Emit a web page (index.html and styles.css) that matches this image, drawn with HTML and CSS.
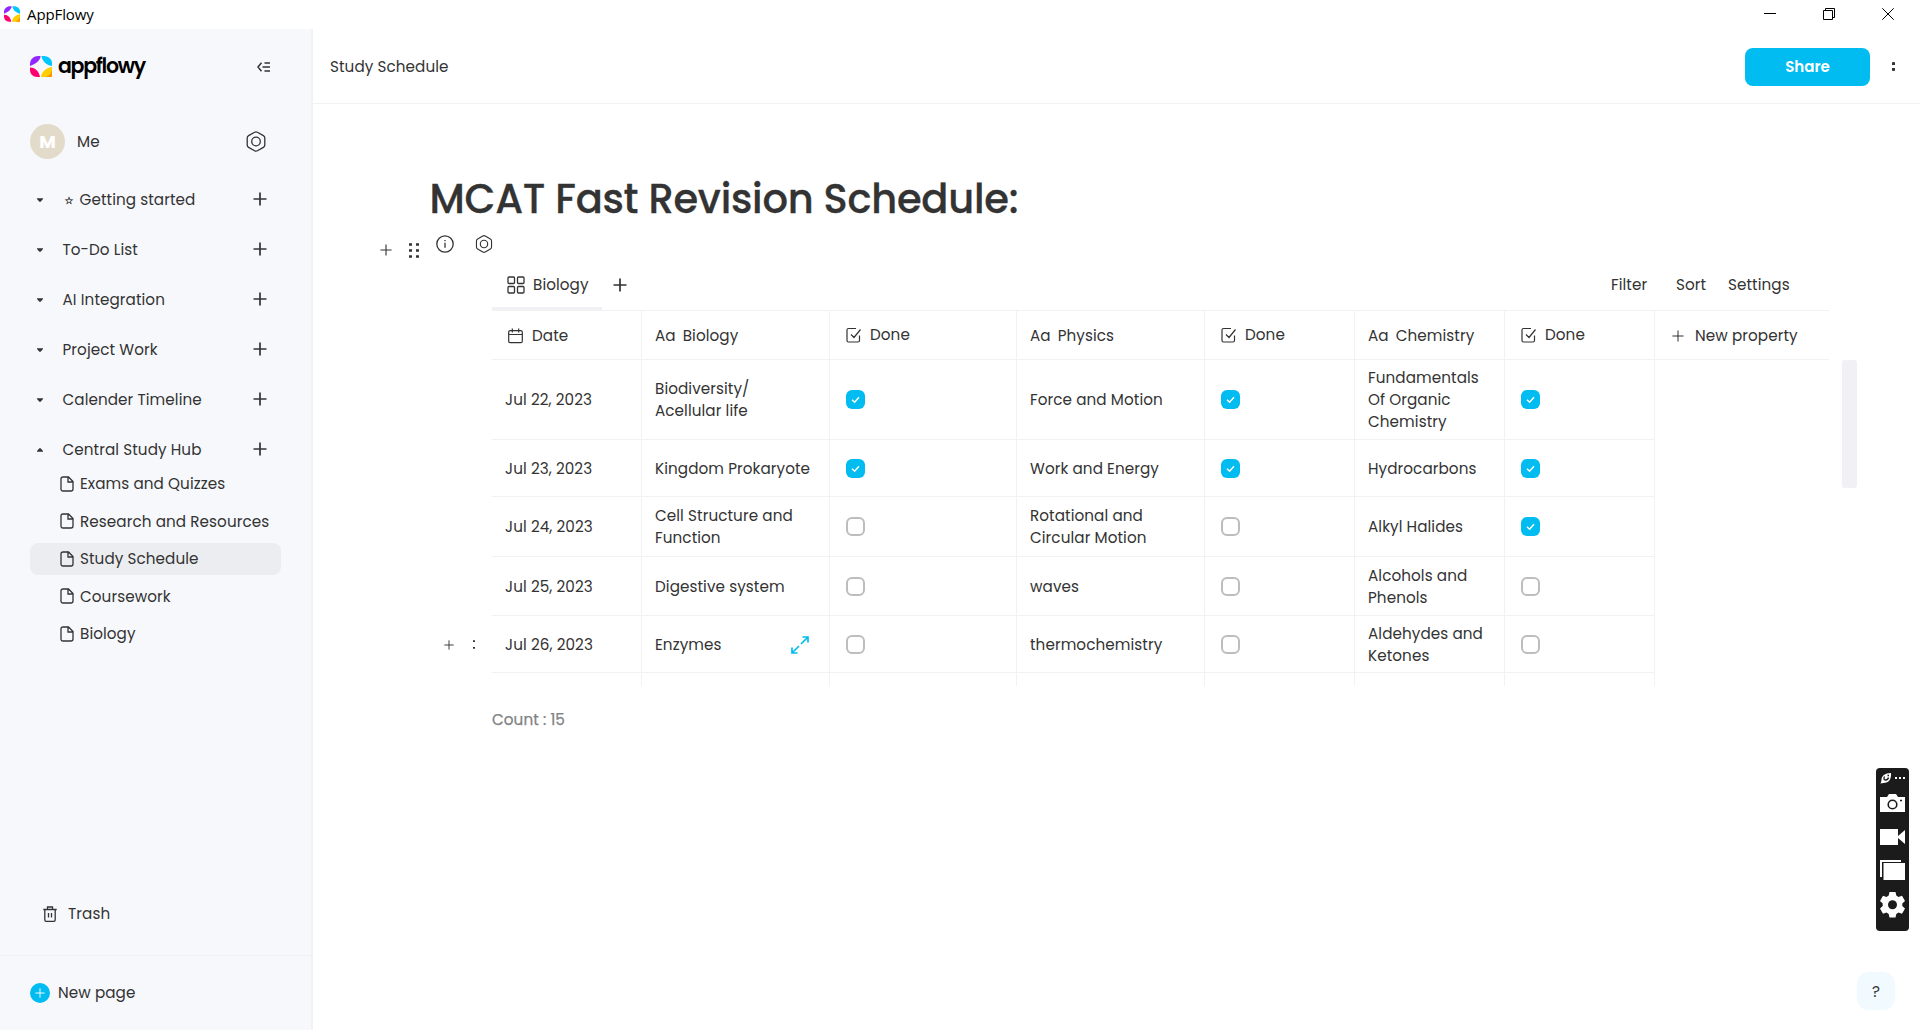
FILE: index.html
```html
<!DOCTYPE html>
<html lang="en">
<head>
<meta charset="utf-8">
<title>AppFlowy</title>
<link rel="stylesheet" href="styles.css">
</head>
<body>
<svg class="defs" aria-hidden="true">
  <symbol id="logo" viewBox="0 0 22 21">
    <path fill="#9327ff" d="M0 10V8C0 3 4 0 8 0h2.500c.500 3-4 8-10.500 10z"/>
    <path fill="#00c8ff" d="M11.500 0h2.500c4 0 8 3 8 7v3C16 9 12 5 11.500 0z"/>
    <path fill="#ff006e" d="M0 11.500c6 0 9 4.500 10 9.500H7c-4 0-7-3-7-7z"/>
    <path fill="#ffce00" d="M22 11v10H11c1-6 5-9 11-10z"/>
    <path fill="#ff9500" d="M22 14v7h-6.500c3-1 5.500-3 6.500-7z"/>
  </symbol>
  <symbol id="plus" viewBox="0 0 14 14"><path d="M7 .5v13M.5 7h13"/></symbol>
  <symbol id="hex" viewBox="0 0 20 21"><path d="M8.600 1.200a2.800 2.800 0 0 1 2.800 0l6 3.400a2.800 2.800 0 0 1 1.400 2.400v7a2.800 2.800 0 0 1-1.400 2.400l-6 3.400a2.800 2.800 0 0 1-2.800 0l-6-3.400A2.800 2.800 0 0 1 1.200 14V7a2.800 2.800 0 0 1 1.400-2.400z"/><circle cx="10" cy="10.500" r="4.300"/></symbol>
  <symbol id="info" viewBox="0 0 18 18"><circle cx="9" cy="9" r="8.200"/><path d="M9 7.800v5M9 5v1.200"/></symbol>
  <symbol id="page" viewBox="0 0 14 16"><path d="M1 3Q1 1 3 1H8.500L13 5.500V13Q13 15 11 15H3Q1 15 1 13zM8 1.200V6H12.800"/></symbol>
  <symbol id="trash" viewBox="0 0 14 16"><path d="M.3 3.500h13.400M4.500 3.300V1h5v2.300M1.800 3.500V14q0 1.300 1.300 1.300h7.800q1.300 0 1.300-1.300V3.500M5.500 7v4.500M8.500 7v4.500"/></symbol>
  <symbol id="grid" viewBox="0 0 18 18"><rect x="1" y="1" width="6.500" height="6.500" rx="1"/><rect x="10.500" y="1" width="6.500" height="6.500" rx="1"/><rect x="1" y="10.500" width="6.500" height="6.500" rx="1"/><rect x="10.500" y="10.500" width="6.500" height="6.500" rx="1"/></symbol>
  <symbol id="cal" viewBox="0 0 15 16"><rect x=".7" y="2.700" width="13.600" height="12" rx="1.500"/><path d="M.7 6.500h13.600M4.300.5v4M10.700.5v4"/></symbol>
  <symbol id="check" viewBox="0 0 16 16"><path d="M10 1.500H2.500q-1.500 0-1.500 1.500V13.500q0 1.500 1.500 1.500H12q1.500 0 1.500-1.500V8.500M5 7.500l3 3L14.500 2.500"/></symbol>
  <symbol id="tick" viewBox="0 0 19 19"><path d="M6 9.800l2.600 2.400 4.400-5"/></symbol>
  <symbol id="expand" viewBox="0 0 18 18"><path d="M11.500 1H17v5.500M17 1l-7 7M6.500 17H1v-5.500M1 17l7-7"/></symbol>
</svg>

<header class="titlebar">
  <svg class="app-icon"><use href="#logo"/></svg>
  <span class="app-name">AppFlowy</span>
  <div class="window-buttons">
    <svg viewBox="0 0 12 12"><path d="M0 5.500h12"/></svg>
    <svg viewBox="0 0 12 12"><path d="M.5 2.500h9v9h-9zM2.500 2.500v-2h9v9h-2"/></svg>
    <svg viewBox="0 0 12 12"><path d="M.3.300l11.400 11.400M11.700.300L.3 11.700"/></svg>
  </div>
</header>

<div class="app">
  <aside class="sidebar">
    <div class="brand">
      <svg class="brand-mark"><use href="#logo"/></svg>
      <span class="brand-name">appflowy</span>
      <svg class="collapse" viewBox="0 0 14 10"><path d="M4.500.800L1 5l3.500 4.200M7.500 1h5.500M5.500 5h7.500M7.500 9h5.500"/></svg>
    </div>
    <div class="user">
      <span class="avatar">M</span>
      <span class="user-name">Me</span>
      <svg class="user-settings"><use href="#hex"/></svg>
    </div>
    <nav>
      <div class="folder"><i class="caret"></i><span><small>☆</small>Getting started</span><svg class="add"><use href="#plus"/></svg></div>
      <div class="folder"><i class="caret"></i><span>To-Do List</span><svg class="add"><use href="#plus"/></svg></div>
      <div class="folder"><i class="caret"></i><span>AI Integration</span><svg class="add"><use href="#plus"/></svg></div>
      <div class="folder"><i class="caret"></i><span>Project Work</span><svg class="add"><use href="#plus"/></svg></div>
      <div class="folder"><i class="caret"></i><span>Calender Timeline</span><svg class="add"><use href="#plus"/></svg></div>
      <div class="folder"><i class="caret up"></i><span>Central Study Hub</span><svg class="add"><use href="#plus"/></svg></div>
      <div class="pages">
        <div class="page"><svg><use href="#page"/></svg><span>Exams and Quizzes</span></div>
        <div class="page"><svg><use href="#page"/></svg><span>Research and Resources</span></div>
        <div class="page selected"><svg><use href="#page"/></svg><span>Study Schedule</span></div>
        <div class="page"><svg><use href="#page"/></svg><span>Coursework</span></div>
        <div class="page"><svg><use href="#page"/></svg><span>Biology</span></div>
      </div>
    </nav>
    <div class="trash"><svg><use href="#trash"/></svg><span>Trash</span></div>
    <div class="new-page"><b><svg><use href="#plus"/></svg></b><span>New page</span></div>
  </aside>

  <main class="main">
    <div class="topbar">
      <span class="crumb">Study Schedule</span>
      <button class="share">Share</button>
      <i class="dots2"></i>
    </div>
    <section class="doc">
      <h1>MCAT Fast Revision Schedule:</h1>
      <div class="block-tools">
        <svg class="bt-plus"><use href="#plus"/></svg>
        <svg class="bt-drag" viewBox="0 0 10 15"><path d="M0 1.500h3M7 1.500h3M0 7.500h3M7 7.500h3M0 13.500h3M7 13.500h3"/></svg>
        <svg class="bt-info"><use href="#info"/></svg>
        <svg class="bt-hex"><use href="#hex"/></svg>
      </div>
      <div class="database">
        <div class="tabs">
          <div class="tab"><svg><use href="#grid"/></svg><span>Biology</span></div>
          <svg class="tab-add"><use href="#plus"/></svg>
          <span class="filter">Filter</span><span class="sort">Sort</span><span class="settings">Settings</span>
        </div>
        <div class="row head">
          <div class="cell"><svg class="cal"><use href="#cal"/></svg><span>Date</span></div>
          <div class="cell"><em>Aa</em><span>Biology</span></div>
          <div class="cell box"><svg><use href="#check"/></svg><span>Done</span></div>
          <div class="cell"><em>Aa</em><span>Physics</span></div>
          <div class="cell box"><svg><use href="#check"/></svg><span>Done</span></div>
          <div class="cell"><em>Aa</em><span>Chemistry</span></div>
          <div class="cell box"><svg><use href="#check"/></svg><span>Done</span></div>
          <div class="cell new-prop"><svg><use href="#plus"/></svg><span>New property</span></div>
        </div>
        <div class="grid-body">
          <div class="row r1">
            <div class="cell date">Jul 22, 2023</div><div class="cell">Biodiversity/<br>Acellular life</div>
            <div class="cell box"><i class="cb on"><svg><use href="#tick"/></svg></i></div><div class="cell">Force and Motion</div>
            <div class="cell box"><i class="cb on"><svg><use href="#tick"/></svg></i></div><div class="cell">Fundamentals<br>Of Organic<br>Chemistry</div>
            <div class="cell box"><i class="cb on"><svg><use href="#tick"/></svg></i></div>
          </div>
          <div class="row r2">
            <div class="cell date">Jul 23, 2023</div><div class="cell">Kingdom Prokaryote</div>
            <div class="cell box"><i class="cb on"><svg><use href="#tick"/></svg></i></div><div class="cell">Work and Energy</div>
            <div class="cell box"><i class="cb on"><svg><use href="#tick"/></svg></i></div><div class="cell">Hydrocarbons</div>
            <div class="cell box"><i class="cb on"><svg><use href="#tick"/></svg></i></div>
          </div>
          <div class="row r3">
            <div class="cell date">Jul 24, 2023</div><div class="cell">Cell Structure and<br>Function</div>
            <div class="cell box"><i class="cb"></i></div><div class="cell">Rotational and<br>Circular Motion</div>
            <div class="cell box"><i class="cb"></i></div><div class="cell">Alkyl Halides</div>
            <div class="cell box"><i class="cb on"><svg><use href="#tick"/></svg></i></div>
          </div>
          <div class="row r4">
            <div class="cell date">Jul 25, 2023</div><div class="cell">Digestive system</div>
            <div class="cell box"><i class="cb"></i></div><div class="cell">waves</div>
            <div class="cell box"><i class="cb"></i></div><div class="cell">Alcohols and<br>Phenols</div>
            <div class="cell box"><i class="cb"></i></div>
          </div>
          <div class="row r5">
            <div class="row-tools"><svg><use href="#plus"/></svg><i class="dots2"></i></div>
            <div class="cell date">Jul 26, 2023</div><div class="cell">Enzymes<svg class="expand"><use href="#expand"/></svg></div>
            <div class="cell box"><i class="cb"></i></div><div class="cell">thermochemistry</div>
            <div class="cell box"><i class="cb"></i></div><div class="cell">Aldehydes and<br>Ketones</div>
            <div class="cell box"><i class="cb"></i></div>
          </div>
          <div class="row r6">
            <div class="cell"></div><div class="cell"></div><div class="cell"></div><div class="cell"></div><div class="cell"></div><div class="cell"></div><div class="cell"></div>
          </div>
          <div class="scrollbar"></div>
        </div>
        <div class="count">Count : 15</div>
      </div>
    </section>
  </main>
</div>

<div class="capture">
  <svg viewBox="0 0 33 163">
    <g fill="#fff">
      <path d="M4.500 15.500l1-3C5 8 9 5 15 5c.500 6-2 10-7.500 10z"/>
      <rect x="19" y="9" width="2" height="2"/><rect x="23" y="9" width="2" height="2"/><rect x="27" y="9" width="2" height="2"/>
      <path d="M4 29h7l2-3h7l2 3h7v15H4z"/>
      <path d="M4 61h18v16H4zM22 68l7-6v14l-7-6z"/>
      <path d="M4 92h21v2H6v15H4zM7.500 95H29v17H7.500z"/>
      <path d="M13.500 125h6l.800 3.600 2.200 1.300 3.500-1.200 3 5.200-2.700 2.500v2.700l2.700 2.500-3 5.200-3.500-1.200-2.200 1.300-.800 3.600h-6l-.800-3.600-2.200-1.300-3.500 1.200-3-5.200 2.700-2.500v-2.700l-2.700-2.500 3-5.200 3.500 1.200 2.200-1.300z" transform="translate(0 -1)"/>
    </g>
    <circle cx="16.500" cy="36.500" r="4.300" fill="none" stroke="#1b1b1b" stroke-width="1.600"/>
    <path d="M24 32.500h2M8.500 8.500q-1.500 3.500 1 3.500t3-2.500M11.500 7.500h1.500" stroke="#1b1b1b" fill="none"/>
    <circle cx="16.500" cy="136.700" r="4.500" fill="#1b1b1b"/>
  </svg>
</div>
<div class="help">?</div>
</body>
</html>
```
FILE: styles.css
```css
* { box-sizing: border-box; }
body {
  margin: 0; width: 1920px; height: 1030px; overflow: hidden; position: relative;
  display: flex; flex-direction: column; background: #fff; color: #333;
  font-family: Poppins, Inter, sans-serif; font-size: 15.200px; letter-spacing: .08px;
}
svg { fill: none; stroke: #333; stroke-width: 1.3; flex: none; display: block; }
i, em { font-style: normal; }
.defs { position: absolute; width: 0; height: 0; }

.titlebar { height: 29px; padding-bottom: 1px; flex: none; display: flex; align-items: center; padding-left: 4px; color: #000; }
.app-icon { width: 16px; height: 16px; stroke: none; }
.app-name { margin: -1px 0 0 7px; font: 15px "Open Sans", sans-serif; letter-spacing: -.1px; }
.window-buttons { margin-left: auto; display: flex; gap: 47px; padding-right: 26px; }
.window-buttons svg { width: 12px; height: 12px; stroke: #000; stroke-width: 1; }

.app { flex: 1; display: flex; min-height: 0; }
.sidebar { width: 313px; flex: none; background: #f7f8fc; border-right: 2px solid #f2f2f4; display: flex; flex-direction: column; }
.brand { height: 75px; padding: 0 40px 0 30px; display: flex; align-items: center; }
.brand-mark { width: 22px; height: 21px; stroke: none; }
.brand-name { margin: -3px 0 0 6px; font: 600 20.500px Poppins, Inter, sans-serif; color: #000; letter-spacing: -1.300px; }
.collapse { width: 14px; height: 10px; margin-left: auto; stroke-width: 1.500; }
.user { height: 66px; margin-top: 4px; padding: 0 45px 0 30px; display: flex; align-items: center; }
.avatar { width: 35px; height: 35px; border-radius: 50%; background: #e3dbc9; color: #fff; font-weight: 700; font-size: 18px; display: grid; place-items: center; }
.user-name { margin-left: 12px; }
.user-settings { width: 20px; height: 21px; margin-left: auto; }
.folder { height: 50px; padding: 0 44px 0 37px; display: flex; align-items: center; }
.folder .add { width: 14px; height: 14px; margin-left: auto; stroke-width: 1.700; }
.caret { width: 6px; height: 3.500px; margin: 2px 19.500px 0 0; background: #333; clip-path: polygon(0 0, 100% 0, 100% 20%, 60% 100%, 40% 100%, 0 20%); }
.caret.up { clip-path: polygon(0 100%, 100% 100%, 100% 80%, 60% 0, 40% 0, 0 80%); }
.folder small { font: 10px "DejaVu Sans", sans-serif; -webkit-text-stroke: .3px #333; margin: 0 6px 0 2px; position: relative; top: -1px; }
.pages { display: flex; flex-direction: column; gap: 5.500px; margin: -6.500px 30px 0 30px; }
.page { height: 32px; display: flex; align-items: center; padding-left: 30px; gap: 6px; border-radius: 8px; }
.page svg { width: 14px; height: 16px; }
.selected { background: #ecedf1; }
.trash { margin-top: auto; height: 83px; padding: 0 0 1px 43px; display: flex; align-items: center; gap: 11px; border-bottom: 1px solid #eff0f4; }
.trash svg { width: 14px; height: 16px; }
.new-page { height: 74px; padding: 0 0 1px 30px; display: flex; align-items: center; gap: 8px; }
.new-page b { width: 20px; height: 20px; border-radius: 50%; background: #00bcf0; display: grid; place-items: center; }
.new-page svg { width: 10px; height: 10px; stroke: #fff; }

.main { flex: 1; min-width: 0; }
.topbar { height: 75px; border-bottom: 1px solid #f2f2f2; display: flex; align-items: center; padding: 1px 25px 0 17px; }
.share { margin-left: auto; width: 125px; height: 38px; border: 0; border-radius: 8px; background: #00bcf0; color: #fff; font: 600 15px Poppins, Inter, sans-serif; }
.dots2 { width: 3px; height: 9px; border-top: 3px solid #333; border-bottom: 3px solid #333; border-radius: 1px; }
.topbar .dots2 { margin-left: 22px; }

.doc { padding: 64px 0 0 66px; }
h1 { margin: 0 0 0 50.500px; height: 62px; line-height: 62px; font-size: 40px; font-weight: 500; letter-spacing: -.250px; -webkit-text-stroke: .3px #333; }
.block-tools { height: 29px; display: flex; align-items: center; }
.bt-plus { width: 12px; height: 12px; margin: 11px 17px 0 1px; }
.bt-drag { width: 10px; height: 15px; margin: 11px 17px 0 0; stroke-width: 2.500; }
.bt-info { width: 18px; height: 18px; margin: -2px 21px 0 0; }
.bt-hex { width: 18px; height: 18px; margin-top: -2px; }

.database { margin-left: 113px; width: 1337px; }
.tabs { height: 52px; display: flex; align-items: center; border-bottom: 1px solid #f2f2f2; }
.tab { width: 110px; height: 51px; display: flex; align-items: center; gap: 8px; padding: 3px 0 0 15px; border-bottom: 3px solid #f0f0f5; }
.tab svg { width: 18px; height: 18px; }
.tab-add { width: 14px; height: 14px; margin-left: 11px; stroke-width: 1.700; }
.filter { margin-left: auto; width: 65px; }
.sort { width: 52px; }
.settings { width: 101px; }
.row { display: grid; grid-template-columns: 150px 188px 187px 188px 150px 150px 150px; position: relative; line-height: 21.700px; }
.cell { border-right: 1px solid #f2f2f2; border-bottom: 1px solid #f2f2f2; padding: 1px 0 0 13px; display: flex; align-items: center; min-width: 0; white-space: nowrap; position: relative; }
.box { padding: 0 0 0 15.500px; }
.head { grid-template-columns: 150px 188px 187px 188px 150px 150px 150px 174px; height: 49px; }
.head svg { width: 16px; height: 16px; margin-right: 8.500px; stroke-width: 1.200; }
.head .cal { width: 15px; margin: 0 9px 0 3px; }
.head em { margin-right: 7px; }
.head .new-prop { border-right: 0; padding-left: 17px; }
.new-prop svg { width: 12px; height: 12px; margin-right: 11px; }
.grid-body { height: 326px; position: relative; }
.r1 { height: 80px; } .r2 { height: 57px; } .r3 { height: 60px; } .r4 { height: 59px; } .r5 { height: 57px; } .r6 { height: 13px; }
.r6 .cell { border-bottom: 0; }
.cb { width: 19px; height: 19px; border: 2px solid #bdbdbd; border-radius: 6px; }
.cb.on { border: 0; background: #00bcf0; }
.cb svg { width: 19px; height: 19px; stroke: #fff; stroke-width: 1.500; }
.expand { position: absolute; right: 20px; width: 18px; height: 18px; stroke: #00bcf0; stroke-width: 1.700; }
.row-tools { position: absolute; left: -48px; top: 0; height: 100%; display: flex; align-items: center; gap: 19px; }
.row-tools svg { width: 10px; height: 10px; }
.row-tools .dots2 { width: 2px; border-width: 2px; }
.scrollbar { position: absolute; left: 1350px; top: 0; width: 15px; height: 128px; border-radius: 3px; background: #f0f0f5; }
.count { margin-top: 22px; line-height: 23px; color: #828282; -webkit-text-stroke: .25px #828282; }

.capture { position: absolute; left: 1876px; top: 768px; width: 33px; height: 163px; border-radius: 4px; background: #1b1b1b; }
.capture svg { width: 33px; height: 163px; stroke: none; }
.help { position: absolute; left: 1857px; top: 972px; width: 38px; height: 38px; border-radius: 12px; background: #f1faff; display: grid; place-items: center; }
```
